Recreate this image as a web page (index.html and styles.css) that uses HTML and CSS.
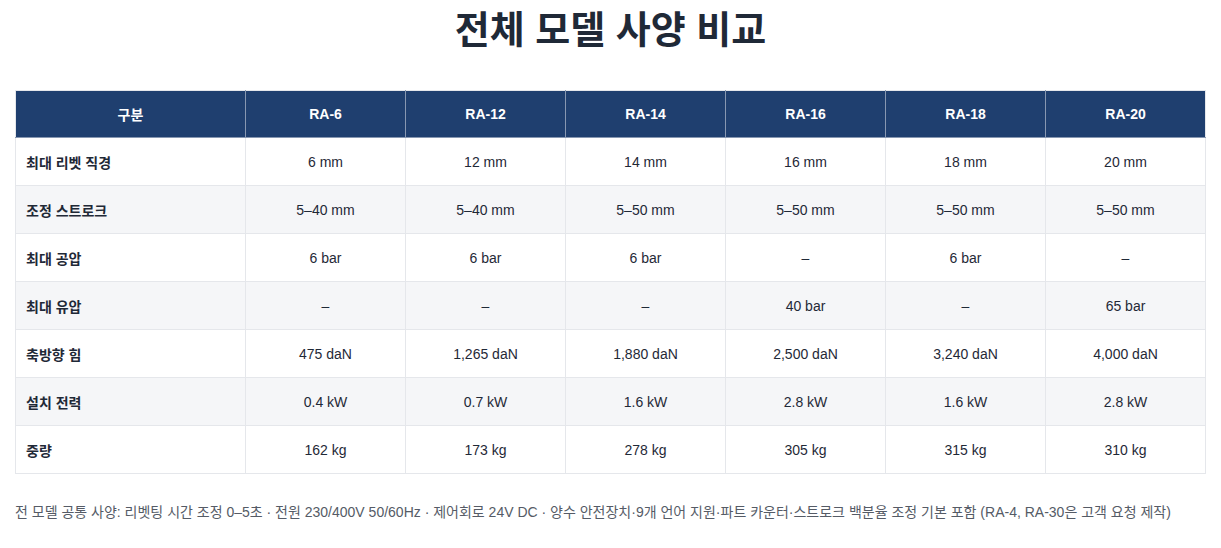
FILE: index.html
```html
<!DOCTYPE html>
<html lang="ko">
<head>
<meta charset="utf-8">
<title>전체 모델 사양 비교</title>
<link rel="stylesheet" href="styles.css">
</head>
<body>
<div class="page">
  <h1 class="title">전체 모델 사양 비교</h1>
  <table class="spec">
    <colgroup>
      <col class="c-label">
      <col class="c-model"><col class="c-model"><col class="c-model">
      <col class="c-model"><col class="c-model"><col class="c-model">
    </colgroup>
    <thead>
      <tr>
        <th>구분</th><th>RA-6</th><th>RA-12</th><th>RA-14</th><th>RA-16</th><th>RA-18</th><th>RA-20</th>
      </tr>
    </thead>
    <tbody>
      <tr><th>최대 리벳 직경</th><td>6 mm</td><td>12 mm</td><td>14 mm</td><td>16 mm</td><td>18 mm</td><td>20 mm</td></tr>
      <tr><th>조정 스트로크</th><td>5–40 mm</td><td>5–40 mm</td><td>5–50 mm</td><td>5–50 mm</td><td>5–50 mm</td><td>5–50 mm</td></tr>
      <tr><th>최대 공압</th><td>6 bar</td><td>6 bar</td><td>6 bar</td><td>–</td><td>6 bar</td><td>–</td></tr>
      <tr><th>최대 유압</th><td>–</td><td>–</td><td>–</td><td>40 bar</td><td>–</td><td>65 bar</td></tr>
      <tr><th>축방향 힘</th><td>475 daN</td><td>1,265 daN</td><td>1,880 daN</td><td>2,500 daN</td><td>3,240 daN</td><td>4,000 daN</td></tr>
      <tr><th>설치 전력</th><td>0.4 kW</td><td>0.7 kW</td><td>1.6 kW</td><td>2.8 kW</td><td>1.6 kW</td><td>2.8 kW</td></tr>
      <tr><th>중량</th><td>162 kg</td><td>173 kg</td><td>278 kg</td><td>305 kg</td><td>315 kg</td><td>310 kg</td></tr>
    </tbody>
  </table>
  <p class="note">전 모델 공통 사양: 리벳팅 시간 조정 0–5초 · 전원 230/400V 50/60Hz · 제어회로 24V DC · 양수 안전장치·9개 언어 지원·파트 카운터·스트로크 백분율 조정 기본 포함 (RA-4, RA-30은 고객 요청 제작)</p>
</div>
</body>
</html>
```

FILE: styles.css
```css
html, body {
  margin: 0;
  padding: 0;
  background: #ffffff;
}
body {
  font-family: "Liberation Sans", Arial, "Noto Sans CJK KR", sans-serif;
  color: #1f2937;
}
.page {
  padding: 0 15px;
}
.title {
  margin: 8px 0 37px;
  font-size: 38px;
  line-height: 45px;
  font-weight: 700;
  text-align: center;
  color: #1f2937;
}
.spec {
  width: 1191px;
  table-layout: fixed;
  border-collapse: collapse;
  font-size: 14px;
}
.c-label { width: 230px; }
.c-model { width: 160px; }
.spec th, .spec td {
  border: 1px solid #e5e7eb;
  padding: 0 12px;
  height: 47px;
  text-align: center;
  color: #1f2937;
}
.spec thead th {
  background: #1f3f6f;
  color: #ffffff;
  font-weight: 700;
  height: 46px;
  border-color: #8797b1;
  border-top-color: #e5e7eb;
}
.spec thead th:first-child { border-left-color: #e5e7eb; }
.spec thead th:last-child { border-right-color: #e5e7eb; }
.spec tbody th {
  text-align: left;
  font-weight: 700;
  padding-left: 10px;
}
.spec tbody td {
  font-weight: 400;
}
.spec tbody tr:nth-child(even) {
  background: #f5f6f8;
}
.note {
  margin: 29px 0 0;
  font-size: 14px;
  line-height: 18px;
  color: #555b66;
}
```
